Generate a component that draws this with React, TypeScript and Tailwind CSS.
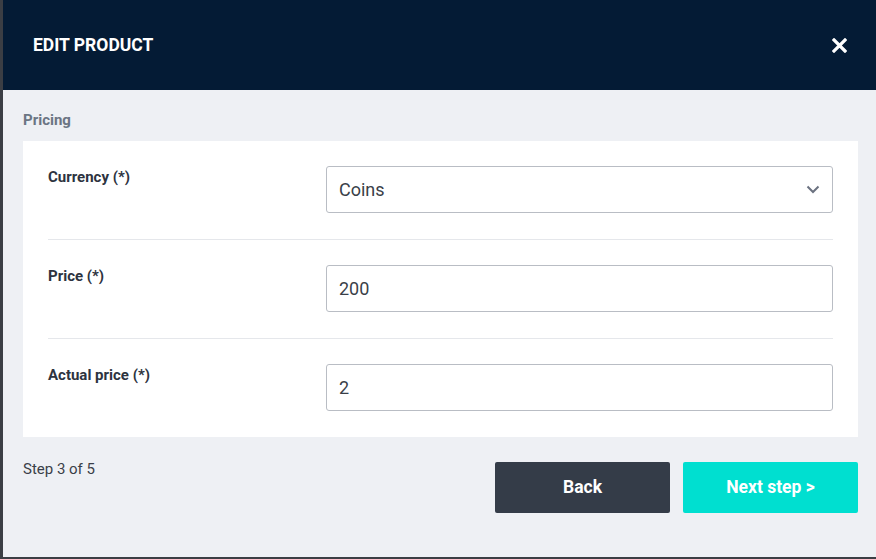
import React from 'react';

function Row({ label, children, last }: { label: string; children: React.ReactNode; last?: boolean }) {
  return (
    <div className={`flex pt-[25px] pb-[26px] ${last ? '' : 'border-b border-[#e5e7eb]'}`}>
      <label className="w-[278px] text-[15px] font-bold text-[#2d3340]">{label}</label>
      <div className="flex-1">{children}</div>
    </div>
  );
}

export default function App() {
  return (
    <div className="h-[559px] w-[876px] bg-[#3b3e44] pl-[3px] pb-[2px] font-['Roboto',sans-serif] overflow-hidden">
      <div className="flex h-full flex-col bg-[#eef0f4]">
        <div className="flex h-[90px] shrink-0 items-center justify-between bg-[#041b35] pl-[30px] pr-[29px]">
          <h1 className="text-[17.5px] font-bold text-white">EDIT PRODUCT</h1>
          <button className="text-white">
            <svg width="15" height="15" viewBox="0 0 15 15">
              <path d="M2 2L13 13M13 2L2 13" stroke="currentColor" strokeWidth="3.2" strokeLinecap="square" />
            </svg>
          </button>
        </div>

        <div className="pl-[20px] pr-[18px] pt-[19px]">
          <div className="text-[15px] font-bold text-[#6b7583]">Pricing</div>
          <div className="mt-[9px] bg-white px-[25px]">
            <Row label="Currency (*)">
              <div className="flex h-[47px] items-center justify-between rounded-[3px] border border-[#b9bdc4] pl-[12px] pr-[12px] text-[18px] text-[#3a3f48]">
                <span>Coins</span>
                <svg width="14" height="9" viewBox="0 0 14 9">
                  <path d="M1.5 1.5L7 7L12.5 1.5" stroke="#6b7280" strokeWidth="2" fill="none" />
                </svg>
              </div>
            </Row>
            <Row label="Price (*)">
              <div className="flex h-[47px] items-center rounded-[3px] border border-[#b9bdc4] pl-[12px] text-[18px] text-[#3a3f48]">200</div>
            </Row>
            <Row label="Actual price (*)" last>
              <div className="flex h-[47px] items-center rounded-[3px] border border-[#b9bdc4] pl-[12px] text-[18px] text-[#3a3f48]">2</div>
            </Row>
          </div>

          <div className="mt-[25px] flex items-start justify-between">
            <div className="-mt-[4px] text-[15px] text-[#3a3f48]">Step 3 of 5</div>
            <div className="flex gap-[13px]">
              <button className="h-[51px] w-[175px] rounded-[2px] bg-[#343c48] text-[17.5px] font-bold text-white">Back</button>
              <button className="h-[51px] w-[175px] rounded-[2px] bg-[#00dfd0] text-[17.5px] font-bold text-white">Next step &gt;</button>
            </div>
          </div>
        </div>
      </div>
    </div>
  );
}
